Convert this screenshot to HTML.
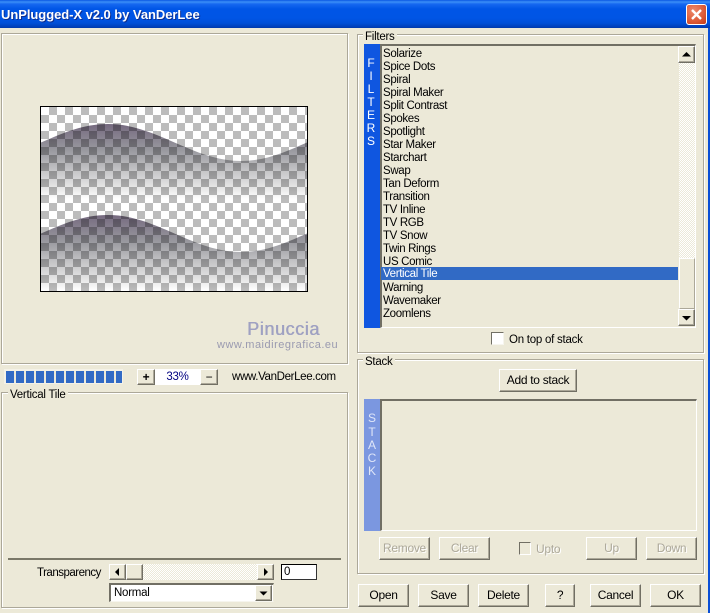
<!DOCTYPE html>
<html><head><meta charset="utf-8">
<style>
html,body{margin:0;padding:0;background:#ece9d8}
#w{position:relative;width:710px;height:613px;overflow:hidden;background:#ece9d8;font-family:"Liberation Sans",sans-serif;font-size:11.5px;color:#000;letter-spacing:-.25px}
#w div{position:absolute;box-sizing:border-box;white-space:nowrap}
.g{border:1px solid #aca899;box-shadow:inset 1px 1px 0 #fff,1px 1px 0 #fff}
.lg{background:#ece9d8;padding:0 2px;line-height:13px;height:13px}
.b{background:#ece9d8;border-top:1px solid #fff;border-left:1px solid #fff;border-right:1px solid #716f64;border-bottom:1px solid #716f64;box-shadow:inset -1px -1px 0 #aca899;text-align:center;font-size:12px;line-height:20px;letter-spacing:-.3px}
.d{color:#aca899;text-shadow:1px 1px 0 #fff}
.t{line-height:13px;height:13px}
.r{left:383px;height:13px;line-height:13px;width:200px;font-size:11.5px;letter-spacing:-.35px}
.tr{background:repeating-conic-gradient(#fff 0 25%,#ece9d8 0 50%) 0 0/2px 2px}
.l{color:#fff;width:16px;text-align:center;line-height:13px;height:13px;font-size:12px;letter-spacing:0}
</style></head><body><div id="w">
<div style="left:0;top:0;width:710px;height:28px;background:linear-gradient(#0a57e3 0,#3b8ff7 2px,#1668f0 4px,#0055e6 9px,#0055e5 18px,#0050d8 23px,#003fb8 27px,#0038a8 28px)"></div>
<div style="left:1px;top:6px;height:18px;line-height:18px;font-weight:bold;font-size:13px;color:#fff;text-shadow:1px 1px 0 #0f2f8f;letter-spacing:-.05px">UnPlugged-X v2.0 by VanDerLee</div>
<div style="left:686px;top:4px;width:21px;height:21px;border:1px solid #fff;border-radius:3px;background:radial-gradient(circle at 35% 30%,#ec8a6c,#dd5a36 60%,#c13a18)"></div>
<svg style="position:absolute;left:686px;top:4px" width="21" height="21"><path d="M6 6L15 15M15 6L6 15" stroke="#fff" stroke-width="2.4" fill="none"/></svg>
<div style="left:708px;top:28px;width:2px;height:585px;background:#0a4fd6"></div>

<div class="g" style="left:1px;top:33px;width:347px;height:331px"></div>
<svg style="position:absolute;left:40px;top:106px;isolation:isolate" width="268" height="186" viewBox="0 0 268 186">
<defs>
<pattern id="c" width="16" height="16" patternUnits="userSpaceOnUse" x="1" y="1"><rect width="16" height="16" fill="#fff"/><rect x="8" width="8" height="8" fill="#bcbcbc"/><rect y="8" width="8" height="8" fill="#bcbcbc"/></pattern>
<linearGradient id="a" gradientUnits="userSpaceOnUse" x1="0" y1="17" x2="0" y2="93"><stop offset="0" stop-color="#74687e"/><stop offset=".35" stop-color="#98989e"/><stop offset=".62" stop-color="#c4c4c6"/><stop offset=".85" stop-color="#e6e6e6"/><stop offset="1" stop-color="#fff"/></linearGradient>
<linearGradient id="a2" gradientUnits="userSpaceOnUse" x1="0" y1="108" x2="0" y2="185"><stop offset="0" stop-color="#74687e"/><stop offset=".35" stop-color="#98989e"/><stop offset=".62" stop-color="#c4c4c6"/><stop offset=".85" stop-color="#e6e6e6"/><stop offset="1" stop-color="#fff"/></linearGradient>
</defs>
<rect x="1" y="1" width="266" height="184" fill="url(#c)"/>
<path style="mix-blend-mode:multiply" d="M1 36.5C23 27 43 18 68 18C116 18 153 55 201 55C226 55 245 46 267 36.5V93H1Z" fill="url(#a)"/>
<path style="mix-blend-mode:multiply" d="M1 127.5C23 118 43 109 68 109C116 109 153 146 201 146C226 146 245 137 267 127.5V185H1Z" fill="url(#a2)"/>
<rect x=".5" y=".5" width="267" height="185" fill="none" stroke="#000"/>
</svg>
<div style="left:247px;top:318px;font-size:18px;line-height:22px;color:#9fa1c2;letter-spacing:.6px;text-shadow:.5px 0 0 #9fa1c2">Pinuccia</div>
<div style="left:217px;top:339px;font-size:11px;line-height:13px;color:#9a9ab0;letter-spacing:.5px">www.maidiregrafica.eu</div>

<div style="left:4px;top:369px;width:119px;height:15px;background:#f4f2e8"></div>
<div style="left:6px;top:371px;width:116px;height:12px;background:repeating-linear-gradient(90deg,#316ac5 0 8px,#ece9d8 8px 10px)"></div>
<div class="b" style="left:137px;top:369px;width:18px;height:16px;line-height:14px;font-weight:bold">+</div>
<div style="left:155px;top:369px;width:45px;height:16px;background:#fff;color:#000080;text-align:center;line-height:16px">33%</div>
<div class="b" style="left:200px;top:369px;width:18px;height:16px;line-height:14px">−</div>
<div class="t" style="left:232px;top:370px;font-size:11.5px;letter-spacing:-.35px;line-height:14px">www.VanDerLee.com</div>

<div class="g" style="left:1px;top:392px;width:347px;height:216px"></div>
<div class="lg" style="left:8px;top:388px;line-height:14px">Vertical Tile</div>
<div style="left:8px;top:558px;width:333px;height:2px;background:#7a7868"></div>
<div class="t" style="left:37px;top:566px;letter-spacing:-.5px;line-height:14px">Transparency</div>
<div class="tr" style="left:109px;top:564px;width:165px;height:16px"></div>
<div class="b" style="left:109px;top:564px;width:17px;height:16px"></div>
<svg style="position:absolute;left:109px;top:564px" width="17" height="16"><path d="M10 4V12L6 8Z" fill="#000"/></svg>
<div class="b" style="left:126px;top:564px;width:17px;height:16px"></div>
<div class="b" style="left:257px;top:564px;width:17px;height:16px"></div>
<svg style="position:absolute;left:257px;top:564px" width="17" height="16"><path d="M7 4V12L11 8Z" fill="#000"/></svg>
<div style="left:281px;top:564px;width:36px;height:16px;background:#fff;border:1px solid #000;border-right-color:#333;border-bottom-color:#333;padding-left:2px;line-height:14px">0</div>
<div style="left:109px;top:583px;width:165px;height:19px;background:#fff;border-top:2px solid #716f64;border-left:2px solid #716f64;border-right:1px solid #ece9d8;border-bottom:1px solid #f6f5ee;padding-left:3px;line-height:17px">Normal</div>
<div class="b" style="left:255px;top:585px;width:17px;height:16px"></div>
<svg style="position:absolute;left:255px;top:585px" width="17" height="16"><path d="M4.5 6.5H12.5L8.5 10.5Z" fill="#000"/></svg>

<div class="g" style="left:357px;top:34px;width:347px;height:319px"></div>
<div class="lg" style="left:363px;top:30px;line-height:14px">Filters</div>
<div style="left:364px;top:44px;width:16px;height:284px;background:#0f56e0"></div>
<div class="l" style="left:363px;top:57px">F</div>
<div class="l" style="left:363px;top:70px">I</div>
<div class="l" style="left:363px;top:83px">L</div>
<div class="l" style="left:363px;top:96px">T</div>
<div class="l" style="left:363px;top:109px">E</div>
<div class="l" style="left:363px;top:122px">R</div>
<div class="l" style="left:363px;top:135px">S</div>
<div style="left:380px;top:44px;width:316px;height:284px;border-top:2px solid #716f64;border-left:2px solid #716f64;border-right:1px solid #fff;border-bottom:1px solid #fff"></div>
<div class="r" style="top:48px">Solarize</div>
<div class="r" style="top:61px">Spice Dots</div>
<div class="r" style="top:74px">Spiral</div>
<div class="r" style="top:87px">Spiral Maker</div>
<div class="r" style="top:100px">Split Contrast</div>
<div class="r" style="top:113px">Spokes</div>
<div class="r" style="top:126px">Spotlight</div>
<div class="r" style="top:139px">Star Maker</div>
<div class="r" style="top:152px">Starchart</div>
<div class="r" style="top:165px">Swap</div>
<div class="r" style="top:178px">Tan Deform</div>
<div class="r" style="top:191px">Transition</div>
<div class="r" style="top:204px">TV Inline</div>
<div class="r" style="top:217px">TV RGB</div>
<div class="r" style="top:230px">TV Snow</div>
<div class="r" style="top:243px">Twin Rings</div>
<div class="r" style="top:256px">US Comic</div>
<div style="left:381px;top:267px;width:297px;height:13px;background:#316ac5"></div>
<div class="r" style="top:268px;color:#fff;line-height:13px">Vertical Tile</div>
<div class="r" style="top:282px">Warning</div>
<div class="r" style="top:295px">Wavemaker</div>
<div class="r" style="top:308px">Zoomlens</div>
<div class="tr" style="left:679px;top:46px;width:16px;height:212px"></div>
<div class="b" style="left:678px;top:46px;width:17px;height:17px"></div>
<svg style="position:absolute;left:678px;top:46px" width="17" height="17"><path d="M4 10.5H13L8.5 6Z" fill="#000"/></svg>
<div class="b" style="left:679px;top:258px;width:16px;height:51px;border-right-color:#aca899;border-bottom-color:#aca899;box-shadow:none"></div>
<div class="b" style="left:678px;top:309px;width:17px;height:17px"></div>
<svg style="position:absolute;left:678px;top:309px" width="17" height="17"><path d="M4 7H13L8.5 11.5Z" fill="#000"/></svg>
<div style="left:491px;top:332px;width:13px;height:13px;background:#fff;border-top:1px solid #716f64;border-left:1px solid #716f64;border-right:1px solid #f6f5ee;border-bottom:1px solid #f6f5ee"></div>
<div class="t" style="left:509px;top:333px;line-height:14px">On top of stack</div>

<div class="g" style="left:357px;top:359px;width:347px;height:215px"></div>
<div class="lg" style="left:363px;top:355px;line-height:14px">Stack</div>
<div class="b" style="left:499px;top:369px;width:78px;height:23px">Add to stack</div>
<div style="left:364px;top:399px;width:16px;height:132px;background:#7b97e0"></div>
<div class="l" style="left:364px;top:412px;color:#dfe6f8">S</div>
<div class="l" style="left:364px;top:426px;color:#dfe6f8">T</div>
<div class="l" style="left:364px;top:439px;color:#dfe6f8">A</div>
<div class="l" style="left:364px;top:452px;color:#dfe6f8">C</div>
<div class="l" style="left:364px;top:465px;color:#dfe6f8">K</div>
<div style="left:380px;top:399px;width:317px;height:132px;border-top:2px solid #716f64;border-left:2px solid #716f64;border-right:1px solid #fff;border-bottom:1px solid #fff"></div>
<div class="b d" style="left:379px;top:537px;width:51px;height:23px">Remove</div>
<div class="b d" style="left:439px;top:537px;width:51px;height:23px">Clear</div>
<div style="left:519px;top:542px;width:12px;height:13px;border-top:1px solid #716f64;border-left:1px solid #716f64;border-right:1px solid #fff;border-bottom:1px solid #fff"></div>
<div class="t d" style="left:536px;top:543px;font-size:12px">Upto</div>
<div class="b d" style="left:586px;top:537px;width:51px;height:23px">Up</div>
<div class="b d" style="left:646px;top:537px;width:51px;height:23px">Down</div>

<div class="b" style="left:358px;top:584px;width:51px;height:23px">Open</div>
<div class="b" style="left:418px;top:584px;width:51px;height:23px">Save</div>
<div class="b" style="left:478px;top:584px;width:51px;height:23px">Delete</div>
<div class="b" style="left:545px;top:584px;width:30px;height:23px">?</div>
<div class="b" style="left:590px;top:584px;width:51px;height:23px">Cancel</div>
<div class="b" style="left:650px;top:584px;width:51px;height:23px">OK</div>
</div></body></html>
